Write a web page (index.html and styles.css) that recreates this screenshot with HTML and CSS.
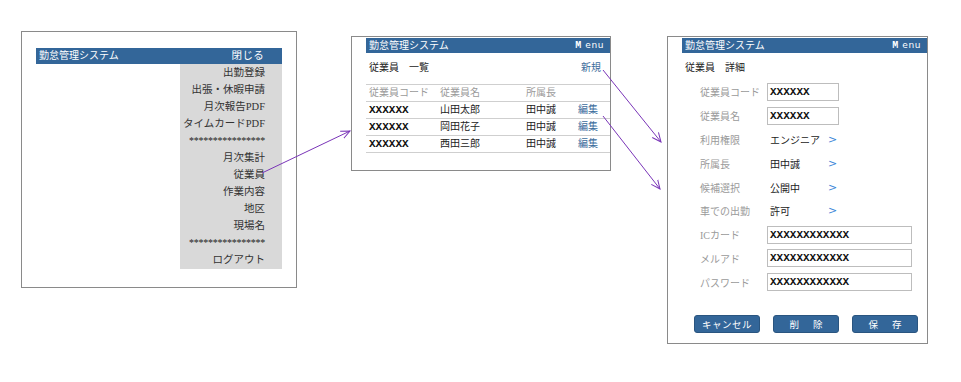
FILE: index.html
```html
<!DOCTYPE html>
<html lang="ja">
<head>
    <meta charset="UTF-8">
    <meta name="viewport" content="width=device-width, initial-scale=1.0">
    <title>勤怠管理システム 画面遷移</title>
    <link rel="stylesheet" href="styles.css">
</head>
<body>
    <div class="canvas">

        <!-- メニュー画面 -->
        <div class="frame frame-menu">
            <div class="app-bar">
                <span class="app-title">勤怠管理システム</span>
                <span class="app-close">閉じる</span>
            </div>
            <ul class="side-menu">
                <li>出勤登録</li>
                <li>出張・休暇申請</li>
                <li>月次報告PDF</li>
                <li>タイムカードPDF</li>
                <li class="sep">****************</li>
                <li>月次集計</li>
                <li>従業員</li>
                <li>作業内容</li>
                <li>地区</li>
                <li>現場名</li>
                <li class="sep">****************</li>
                <li>ログアウト</li>
            </ul>
        </div>

        <!-- 従業員一覧 -->
        <div class="frame frame-list">
            <div class="app-bar">
                <span class="app-title">勤怠管理システム</span>
                <span class="app-menu"><b>M</b> enu</span>
            </div>
            <div class="page-head">
                <span>従業員　一覧</span>
                <a href="#" class="link">新規</a>
            </div>
            <div class="list">
                <div class="list-row list-head">
                    <span>従業員コード</span>
                    <span>従業員名</span>
                    <span>所属長</span>
                    <span></span>
                </div>
                <div class="list-row">
                    <span class="code">XXXXXX</span>
                    <span>山田太郎</span>
                    <span>田中誠</span>
                    <a href="#" class="link">編集</a>
                </div>
                <div class="list-row">
                    <span class="code">XXXXXX</span>
                    <span>岡田花子</span>
                    <span>田中誠</span>
                    <a href="#" class="link">編集</a>
                </div>
                <div class="list-row">
                    <span class="code">XXXXXX</span>
                    <span>西田三郎</span>
                    <span>田中誠</span>
                    <a href="#" class="link">編集</a>
                </div>
            </div>
        </div>

        <!-- 従業員詳細 -->
        <div class="frame frame-detail">
            <div class="app-bar">
                <span class="app-title">勤怠管理システム</span>
                <span class="app-menu"><b>M</b> enu</span>
            </div>
            <div class="page-head detail-head">
                <span>従業員　詳細</span>
            </div>
            <div class="form">
                <div class="form-row">
                    <span class="label">従業員コード</span>
                    <span class="field short">XXXXXX</span>
                </div>
                <div class="form-row">
                    <span class="label">従業員名</span>
                    <span class="field short">XXXXXX</span>
                </div>
                <div class="form-row">
                    <span class="label">利用権限</span>
                    <span class="value">エンジニア</span>
                    <span class="chev">&gt;</span>
                </div>
                <div class="form-row">
                    <span class="label">所属長</span>
                    <span class="value">田中誠</span>
                    <span class="chev">&gt;</span>
                </div>
                <div class="form-row">
                    <span class="label">候補選択</span>
                    <span class="value">公開中</span>
                    <span class="chev">&gt;</span>
                </div>
                <div class="form-row">
                    <span class="label">車での出勤</span>
                    <span class="value">許可</span>
                    <span class="chev">&gt;</span>
                </div>
                <div class="form-row">
                    <span class="label">ICカード</span>
                    <span class="field long">XXXXXXXXXXXX</span>
                </div>
                <div class="form-row">
                    <span class="label">メルアド</span>
                    <span class="field long">XXXXXXXXXXXX</span>
                </div>
                <div class="form-row">
                    <span class="label">パスワード</span>
                    <span class="field long">XXXXXXXXXXXX</span>
                </div>
            </div>
            <div class="actions">
                <button class="btn">キャンセル</button>
                <button class="btn wide">削 除</button>
                <button class="btn wide">保 存</button>
            </div>
        </div>

        <!-- 遷移の矢印 -->
        <svg class="arrows" width="961" height="382" viewBox="0 0 961 382">
            <defs>
                <marker id="head" markerWidth="10" markerHeight="10" refX="9" refY="5" orient="auto" markerUnits="userSpaceOnUse">
                    <polyline points="0,1 9,5 0,9" fill="none" stroke="#7a35b8" stroke-width="1"/>
                </marker>
            </defs>
            <line x1="262" y1="173" x2="350" y2="131" stroke="#7a35b8" stroke-width="1" marker-end="url(#head)"/>
            <line x1="603" y1="70" x2="661" y2="142" stroke="#7a35b8" stroke-width="1" marker-end="url(#head)"/>
            <line x1="603" y1="116" x2="660" y2="189" stroke="#7a35b8" stroke-width="1" marker-end="url(#head)"/>
        </svg>
    </div>
</body>
</html>
```

FILE: styles.css
```css
body {
    margin: 0;
    background: #fff;
    font-family: "Liberation Serif", "Noto Sans CJK JP", serif;
    font-size: 10px;
    color: #222;
}
.canvas {
    position: relative;
    width: 961px;
    height: 382px;
}

/* 各画面の枠 (図の上の位置が内容そのもの) */
.frame {
    position: absolute;
    box-sizing: border-box;
    border: 1px solid #8a8a8a;
    background: #fff;
}
.frame-menu {
    left: 21px;
    top: 31px;
    width: 276px;
    height: 257px;
    padding: 16px 14px 0 14px;
}
.frame-list {
    left: 351px;
    top: 36px;
    width: 260px;
    height: 135px;
    padding: 1px 0 0 14px;
}
.frame-detail {
    left: 667px;
    top: 36px;
    width: 261px;
    height: 308px;
    padding: 1px 0 0 14px;
}

.app-bar {
    display: flex;
    justify-content: space-between;
    align-items: center;
    height: 16px;
    background: #336699;
    color: #fff;
    padding: 0 0 0 3px;
    line-height: 16px;
}
.frame-list .app-bar,
.frame-detail .app-bar {
    height: 15px;
    line-height: 15px;
}
.app-close {
    padding-right: 18px;
    font-size: 10.5px;
    letter-spacing: 0.3px;
}
.app-menu {
    font-family: "DejaVu Sans", sans-serif;
    font-size: 9px;
    padding-right: 6px;
    letter-spacing: 0.6px;
}
.app-menu b {
    font-family: "Liberation Mono", monospace;
    font-size: 10px;
}

/* メニュー */
.side-menu {
    list-style: none;
    margin: 0 0 0 auto;
    padding: 0 17px 0 0;
    width: 102px;
    height: 205px;
    box-sizing: border-box;
    background: #d9d9d9;
    text-align: right;
    color: #333;
    font-size: 10.5px;
}
.side-menu li {
    height: 17px;
    line-height: 17px;
    white-space: nowrap;
}
.side-menu .sep {
    font-size: 10px;
    letter-spacing: -0.25px;
    color: #222;
}

/* 一覧 */
.page-head {
    display: flex;
    justify-content: space-between;
    height: 31px;
    line-height: 30px;
    padding: 0 9px 0 3px;
}
.link {
    color: #3c6c9c;
    text-decoration: none;
}
.list {
    border-top: 1px solid #cfcfcf;
}
.list-row {
    display: grid;
    grid-template-columns: 71px 86px 52px auto;
    height: 16px;
    line-height: 16px;
    padding-left: 3px;
    border-bottom: 1px solid #cfcfcf;
}
.list-head {
    color: #9a9a9a;
}
.code {
    font-family: "Liberation Mono", monospace;
    font-weight: bold;
    font-size: 11px;
    color: #111;
}

/* 詳細 */
.detail-head {
    height: 27px;
    line-height: 30px;
}
.form {
    padding-left: 18px;
}
.form-row {
    display: flex;
    align-items: center;
    height: 23.8px;
}
.label {
    width: 67px;
    color: #9a9a9a;
}
.value {
    width: 58px;
    padding-left: 3px;
    color: #222;
}
.chev {
    color: #3b86d8;
    font-family: "DejaVu Sans", sans-serif;
    font-size: 11px;
}
.field {
    box-sizing: border-box;
    height: 18px;
    line-height: 16px;
    border: 1px solid #bdbdbd;
    padding-left: 2px;
    font-family: "Liberation Mono", monospace;
    font-weight: bold;
    font-size: 11px;
    color: #111;
}
.short {
    width: 72px;
}
.long {
    width: 145px;
}

.actions {
    display: flex;
    gap: 13px;
    padding: 21px 0 0 12px;
}
.btn {
    width: 66px;
    height: 18px;
    padding: 0;
    border: 1px solid #2a5580;
    border-radius: 3px;
    background: #336699;
    color: #fff;
    font-family: "Noto Sans CJK JP", sans-serif;
    font-size: 9.5px;
    letter-spacing: 0.5px;
    line-height: 16px;
}
.btn.wide {
    letter-spacing: 6px;
    padding-left: 6px;
}

.arrows {
    position: absolute;
    left: 0;
    top: 0;
    pointer-events: none;
}
```
